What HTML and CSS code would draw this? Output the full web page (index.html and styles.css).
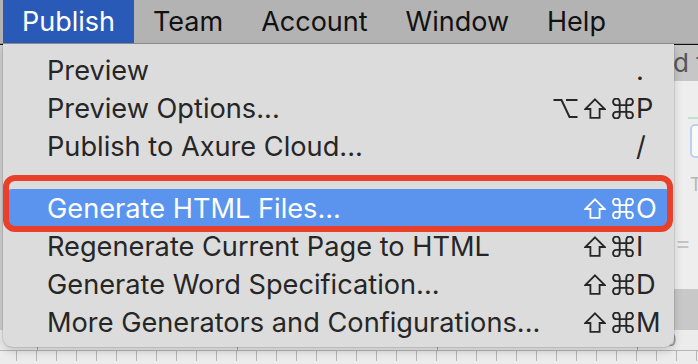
FILE: index.html
```html
<!DOCTYPE html>
<html lang="en">
	<head>
		<meta charset="UTF-8" />
		<title>Publish menu</title>
		<link rel="stylesheet" href="styles.css">
	</head>
	<body>
		<svg class="sprites" xmlns="http://www.w3.org/2000/svg">
			<symbol id="key-option" viewBox="0 0 25 21">
				<path d="M0.5 2H8.5L16.5 19H24.5M13 2H24.5" fill="none" stroke="currentColor" stroke-width="2" />
			</symbol>
			<symbol id="key-shift" viewBox="0 0 22 21">
				<path d="M11 1.3L20.7 11H15.6V19.8H6.4V11H1.3Z" fill="none" stroke="currentColor" stroke-width="1.8" />
			</symbol>
			<symbol id="key-command" viewBox="2.5 2.5 19 19">
				<path d="M15 6v12a3 3 0 1 0 3-3H6a3 3 0 1 0 3 3V6a3 3 0 1 0-3 3h12a3 3 0 1 0-3-3" fill="none" stroke="currentColor" stroke-width="1.7" />
			</symbol>
		</svg>

		<div class="screen">
			<nav class="menubar">
				<span class="menu-title active">Publish</span>
				<span class="menu-title">Team</span>
				<span class="menu-title">Account</span>
				<span class="menu-title">Window</span>
				<span class="menu-title">Help</span>
			</nav>

			<div class="workspace">
				<div class="canvas-area">
					<div class="left-edge"></div>
					<div class="canvas"></div>
					<div class="side-panel">
						<div class="side-toolbar">d to</div>
						<div class="side-body">
							<div class="side-accent"></div>
							<div class="side-input"></div>
							<div class="side-label">T</div>
							<div class="side-equal">=</div>
						</div>
						<div class="side-block"></div>
					</div>
				</div>
				<div class="ruler">
					<div class="ruler-labels">
						<span>100</span>
						<span>200</span>
						<span>300</span>
						<span>400</span>
					</div>
					<div class="ruler-ticks"></div>
				</div>
			</div>

			<div class="dropdown">
				<div class="item">
					<span class="label">Preview</span>
					<span class="mods"></span>
					<span class="key">.</span>
				</div>
				<div class="item">
					<span class="label">Preview Options...</span>
					<span class="mods">
						<svg class="mod"><use href="#key-option" /></svg>
						<svg class="mod"><use href="#key-shift" /></svg>
						<svg class="mod"><use href="#key-command" /></svg>
					</span>
					<span class="key">P</span>
				</div>
				<div class="item">
					<span class="label">Publish to Axure Cloud...</span>
					<span class="mods"></span>
					<span class="key">/</span>
				</div>
				<div class="separator"></div>
				<div class="item selected">
					<span class="label">Generate HTML Files...</span>
					<span class="mods">
						<svg class="mod"><use href="#key-shift" /></svg>
						<svg class="mod"><use href="#key-command" /></svg>
					</span>
					<span class="key">O</span>
				</div>
				<div class="item">
					<span class="label">Regenerate Current Page to HTML</span>
					<span class="mods">
						<svg class="mod"><use href="#key-shift" /></svg>
						<svg class="mod"><use href="#key-command" /></svg>
					</span>
					<span class="key">I</span>
				</div>
				<div class="item">
					<span class="label">Generate Word Specification...</span>
					<span class="mods">
						<svg class="mod"><use href="#key-shift" /></svg>
						<svg class="mod"><use href="#key-command" /></svg>
					</span>
					<span class="key">D</span>
				</div>
				<div class="item">
					<span class="label">More Generators and Configurations...</span>
					<span class="mods">
						<svg class="mod"><use href="#key-shift" /></svg>
						<svg class="mod"><use href="#key-command" /></svg>
					</span>
					<span class="key">M</span>
				</div>
			</div>

			<div class="callout"></div>
		</div>
	</body>
</html>
```

FILE: styles.css
```css
:root {
	--bar-bg: #b3b3b3;
	--bar-active: #2a5ab8;
	--menu-bg: #dcdcdc;
	--menu-text: #262626;
	--select-bg: #5a94ee;
	--callout: #e8402b;
}
body {
	margin: 0;
	font-family: Inter, 'Liberation Sans', sans-serif;
}
.sprites {
	display: none;
}
.screen {
	position: relative;
	width: 698px;
	height: 364px;
	overflow: hidden;
	display: flex;
	flex-direction: column;
	background-color: #ececec;
}
.menubar {
	display: flex;
	height: 43px;
	padding-left: 3px;
	background-color: var(--bar-bg);
	border-bottom: 1px solid #999;
	flex-shrink: 0;
}
.menu-title {
	display: flex;
	align-items: center;
	padding: 0 19px;
	font-size: 27px;
	color: #111;
}
.menu-title.active {
	background-color: var(--bar-active);
	color: #fff;
}
.workspace {
	flex-grow: 1;
	display: flex;
	flex-direction: column;
	border-top: 1px solid #111;
}
.canvas-area {
	flex-grow: 1;
	display: flex;
}
.left-edge {
	width: 3px;
	background-color: #cfcfcf;
}
.canvas {
	flex-grow: 1;
}
.side-panel {
	width: 24px;
	display: flex;
	flex-direction: column;
	overflow: hidden;
}
.side-toolbar {
	height: 36px;
	flex-shrink: 0;
	background-color: #c6c6c6;
	color: #555;
	font-size: 26px;
	line-height: 36px;
	white-space: nowrap;
	margin-left: -1px;
}
.side-body {
	flex-grow: 1;
	display: flex;
	flex-direction: column;
	background-color: #eeeeee;
}
.side-accent {
	height: 2px;
	margin: 36px 0 0 14px;
	background-color: #bfe0d2;
}
.side-input {
	height: 30px;
	margin: 5px -8px 0 16px;
	border: 2px solid #b9d3ee;
	border-radius: 5px;
	background-color: #fafafa;
}
.side-label {
	margin: 16px 0 0 16px;
	font-size: 18px;
	color: #b5b5b5;
}
.side-equal {
	margin: 36px 0 0 1px;
	font-size: 24px;
	line-height: 24px;
	color: #c4c4c4;
}
.side-block {
	height: 41px;
	flex-shrink: 0;
	background-color: #c8c8c8;
}
.ruler {
	height: 34px;
	flex-shrink: 0;
	display: flex;
	flex-direction: column;
	background-color: #ececec;
}
.ruler-labels {
	display: flex;
	height: 20px;
	padding-left: 37px;
}
.ruler-labels span {
	width: 200px;
	flex-shrink: 0;
	padding: 2px 0 0 6px;
	box-sizing: border-box;
	border-left: 1px solid #a8a8a8;
	font-size: 17px;
	line-height: 17px;
	color: #9a9a9a;
}
.ruler-ticks {
	height: 10px;
	border-top: 1px solid #b5b5b5;
	background-image: repeating-linear-gradient(
		to right,
		transparent 0,
		transparent 16px,
		#b5b5b5 16px,
		#b5b5b5 17px,
		transparent 17px,
		transparent 20px
	);
}
.dropdown {
	position: absolute;
	top: 44px;
	left: 3px;
	width: 671px;
	box-sizing: border-box;
	padding: 7px 0 6px;
	background-color: var(--menu-bg);
	border-radius: 0 0 10px 10px;
	box-shadow: 0 4px 10px rgba(0, 0, 0, 0.18), 0 0 0 1px rgba(0, 0, 0, 0.08);
	color: var(--menu-text);
	font-size: 27.2px;
}
.item {
	display: grid;
	grid-template-columns: 1fr auto 24px;
	column-gap: 2px;
	align-items: center;
	height: 38px;
	margin: 0 5px;
	padding: 0 9px 0 39px;
	border-radius: 4px;
}
.item.selected {
	background-color: var(--select-bg);
	color: #fff;
}
.label {
	white-space: nowrap;
}
.mods {
	display: flex;
	gap: 6px;
	justify-content: flex-end;
}
.mod {
	width: 22px;
	height: 21px;
}
.mods .mod:first-child:nth-last-child(3) {
	width: 25px;
}
.separator {
	height: 24px;
}
.callout {
	position: absolute;
	top: 175px;
	left: 3px;
	width: 670px;
	height: 57px;
	box-sizing: border-box;
	border: 6px solid var(--callout);
	border-radius: 12px;
}
```
